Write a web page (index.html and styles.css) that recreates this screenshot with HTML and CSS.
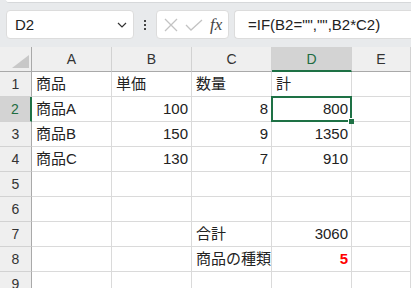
FILE: index.html
```html
<!DOCTYPE html>
<html>
<head>
	<title>Sheet</title>
	<link rel="stylesheet" href="styles.css">
</head>
<body>
	<div class="ribbon-edge"></div>

	<div class="formula-bar">
		<div class="name-box">
			<span>D2</span>
			<svg class="chevron" width="10" height="6" viewBox="0 0 10 6"><path d="M1 1l4 4 4-4" fill="none" stroke="#333" stroke-width="1.2"/></svg>
		</div>
		<div class="dots"><i></i><i></i><i></i></div>
		<div class="fx-buttons">
			<svg width="16" height="16" viewBox="0 0 16 16"><path d="M2 2l12 12M14 2L2 14" stroke="#c3c3c3" stroke-width="1.3" fill="none"/></svg>
			<svg width="18" height="16" viewBox="0 0 18 16"><path d="M1 8l5 5L17 3" stroke="#c3c3c3" stroke-width="1.3" fill="none"/></svg>
			<span class="fx">fx</span>
		</div>
		<div class="formula">=IF(B2="","",B2*C2)</div>
	</div>

	<div class="sheet">
		<div class="corner"><b></b></div>
		<div class="col-head">A</div>
		<div class="col-head">B</div>
		<div class="col-head">C</div>
		<div class="col-head sel">D</div>
		<div class="col-head">E</div>

		<div class="row-head">1</div>
		<div class="cell">商品</div>
		<div class="cell">単価</div>
		<div class="cell">数量</div>
		<div class="cell">計</div>
		<div class="cell"></div>

		<div class="row-head sel">2</div>
		<div class="cell">商品A</div>
		<div class="cell num">100</div>
		<div class="cell num">8</div>
		<div class="cell num active">800</div>
		<div class="cell"></div>

		<div class="row-head">3</div>
		<div class="cell">商品B</div>
		<div class="cell num">150</div>
		<div class="cell num">9</div>
		<div class="cell num">1350</div>
		<div class="cell"></div>

		<div class="row-head">4</div>
		<div class="cell">商品C</div>
		<div class="cell num">130</div>
		<div class="cell num">7</div>
		<div class="cell num">910</div>
		<div class="cell"></div>

		<div class="row-head">5</div>
		<div class="cell"></div>
		<div class="cell"></div>
		<div class="cell"></div>
		<div class="cell"></div>
		<div class="cell"></div>

		<div class="row-head">6</div>
		<div class="cell"></div>
		<div class="cell"></div>
		<div class="cell"></div>
		<div class="cell"></div>
		<div class="cell"></div>

		<div class="row-head">7</div>
		<div class="cell"></div>
		<div class="cell"></div>
		<div class="cell">合計</div>
		<div class="cell num">3060</div>
		<div class="cell"></div>

		<div class="row-head">8</div>
		<div class="cell"></div>
		<div class="cell"></div>
		<div class="cell">商品の種類</div>
		<div class="cell num red">5</div>
		<div class="cell"></div>

		<div class="row-head">9</div>
		<div class="cell"></div>
		<div class="cell"></div>
		<div class="cell"></div>
		<div class="cell"></div>
		<div class="cell"></div>
	</div>
</body>
</html>
```

FILE: styles.css
```css
body {
	margin: 0;
	width: 411px;
	height: 288px;
	overflow: hidden;
	background: #e8eaec;
	font-family: "Liberation Sans", "Noto Sans CJK JP", sans-serif;
	color: #222;
}

.ribbon-edge {
	height: 2px;
	margin: 0 0 0 6px;
	background: #fff;
	border-bottom: 1px solid #d6d8da;
	border-radius: 0 0 0 4px;
}

.formula-bar {
	display: flex;
	align-items: center;
	height: 29px;
	padding: 7px 0 8px 6px;
}

.name-box {
	display: flex;
	align-items: center;
	justify-content: space-between;
	box-sizing: border-box;
	width: 128px;
	height: 29px;
	padding: 0 6px 0 8px;
	background: #fff;
	border: 1px solid #dcdcdc;
	border-radius: 4px;
	font-size: 15px;
}

.chevron {
	margin-top: 1px;
}

.dots {
	display: flex;
	flex-direction: column;
	gap: 2px;
	width: 22px;
	align-items: center;
}
.dots i {
	width: 2px;
	height: 2px;
	background: #444;
}

.fx-buttons {
	display: flex;
	align-items: center;
	gap: 6px;
	box-sizing: border-box;
	width: 73px;
	height: 29px;
	padding: 0 0 0 6px;
	background: #fff;
	border: 1px solid #dcdcdc;
	border-radius: 4px;
}

.fx {
	font-family: "Liberation Serif", serif;
	font-style: italic;
	font-size: 17px;
	color: #444;
	margin-left: 1px;
}

.formula {
	flex: 1;
	box-sizing: border-box;
	height: 29px;
	margin-left: 5px;
	padding: 5px 0 0 13px;
	background: #fff;
	border: 1px solid #dcdcdc;
	border-right: 0;
	border-radius: 4px 0 0 4px;
	font-size: 15px;
	white-space: nowrap;
}

.sheet {
	display: grid;
	grid-template-columns: 32px repeat(4, 80px) 1fr;
	grid-auto-rows: 25px;
	background: #fff;
}

.sheet > div {
	box-sizing: border-box;
	border-right: 1px solid #dadada;
	border-bottom: 1px solid #dadada;
	font-size: 15px;
	line-height: 24px;
	white-space: nowrap;
}

.corner {
	position: relative;
	background: #efefef;
	border-right-color: #a9a9a9 !important;
	border-bottom-color: #a9a9a9 !important;
}
.corner b {
	position: absolute;
	right: 2px;
	bottom: 3px;
	width: 0;
	height: 0;
	border-left: 17px solid transparent;
	border-bottom: 13px solid #c8c8c8;
}

.col-head {
	background: #efefef;
	text-align: center;
	color: #333;
	border-right-color: #d2d2d2 !important;
	border-bottom-color: #a9a9a9 !important;
	font-size: 14px !important;
}
.col-head.sel {
	background: #d3d3d3;
	color: #1e6c41;
	border-bottom: 2px solid #1e7145 !important;
}

.row-head {
	background: #efefef;
	text-align: center;
	color: #333;
	border-right-color: #a9a9a9 !important;
	border-bottom-color: #d2d2d2 !important;
	font-size: 14px !important;
}
.row-head.sel {
	background: #d3d3d3;
	color: #1e6c41;
	border-right: 2px solid #1e7145 !important;
}

.cell {
	padding: 0 3px 0 4px;
}
.cell.num {
	text-align: right;
}
.cell.red {
	color: #f00;
	font-weight: bold;
}

.cell.active {
	position: relative;
}
.cell.active::before {
	content: "";
	position: absolute;
	left: -1px;
	top: -1px;
	right: -1px;
	bottom: -1px;
	border: 2px solid #1e7145;
}
.cell.active::after {
	content: "";
	position: absolute;
	right: -3px;
	bottom: -3px;
	width: 5px;
	height: 5px;
	background: #1e7145;
	border: 1px solid #fff;
	border-right: 0;
	border-bottom: 0;
}
```
